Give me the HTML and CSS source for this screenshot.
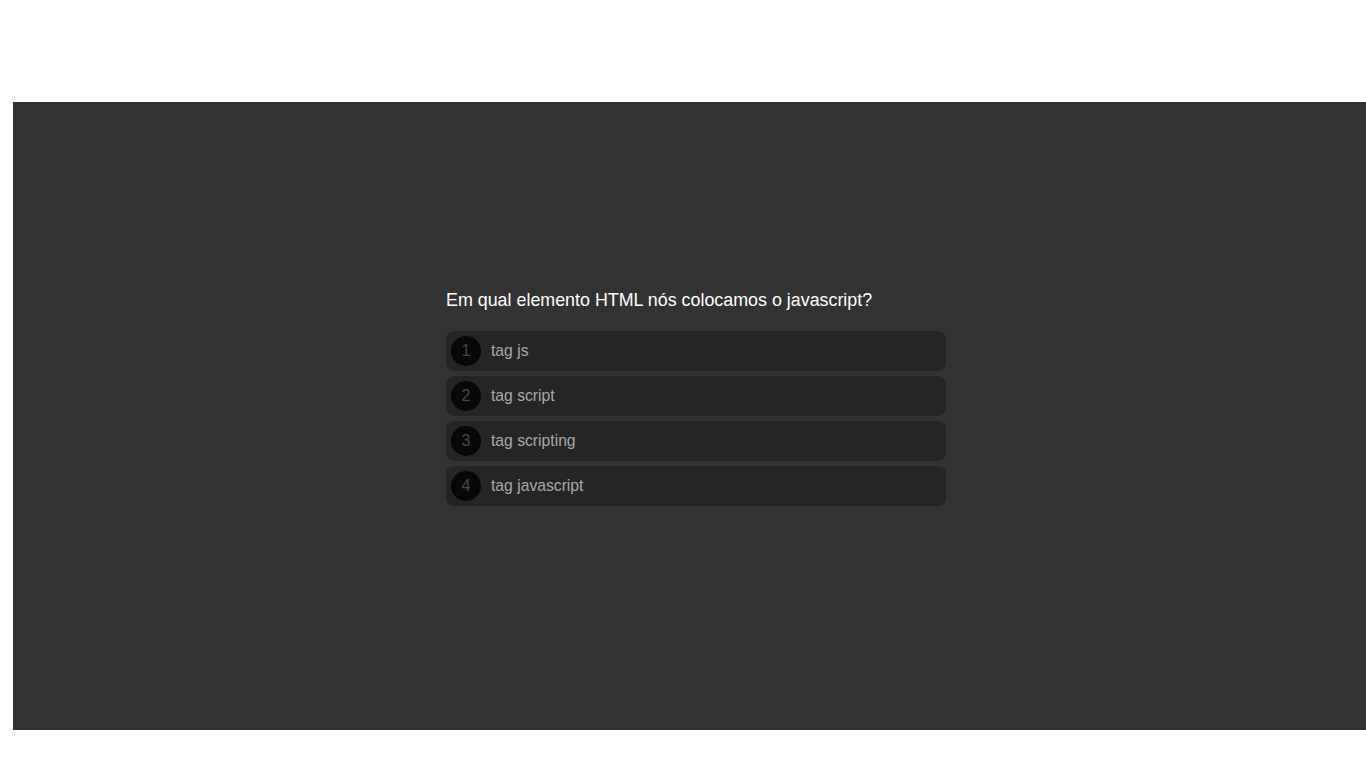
FILE: index.html
```html
<!DOCTYPE html>
<html lang="pt-BR">
<head>
<meta charset="utf-8">
<title>Quiz</title>
<link rel="stylesheet" href="styles.css">
</head>
<body>
<main class="stage">
  <section class="quiz">
    <h1 class="question">Em qual elemento HTML nós colocamos o javascript?</h1>
    <ul class="options">
      <li class="option"><span class="num">1</span><span class="label">tag js</span></li>
      <li class="option"><span class="num">2</span><span class="label">tag script</span></li>
      <li class="option"><span class="num">3</span><span class="label">tag scripting</span></li>
      <li class="option"><span class="num">4</span><span class="label">tag javascript</span></li>
    </ul>
  </section>
</main>
</body>
</html>
```
FILE: styles.css
```css
html, body {
  margin: 0;
  padding: 0;
  background: #ffffff;
  overflow: hidden;
  height: 768px;
}
body {
  font-family: "Liberation Sans", Arial, sans-serif;
}
.stage {
  margin: 102px 0 0 13px;
  width: 1366px;
  height: 628px;
  background: #333333;
  display: flex;
  justify-content: center;
  align-items: flex-start;
  box-sizing: border-box;
  padding-top: 187px;
}
.quiz {
  width: 500px;
}
.question {
  margin: 0 0 20px;
  font-size: 17.87px;
  font-weight: normal;
  color: #ffffff;
  line-height: 22px;
}
.options {
  list-style: none;
  margin: 0;
  padding: 0;
  display: flex;
  flex-direction: column;
  gap: 5px;
}
.option {
  height: 40px;
  background: #252525;
  border-radius: 8px;
  display: flex;
  align-items: center;
  padding-left: 5px;
  gap: 10px;
}
.num {
  width: 30px;
  height: 30px;
  border-radius: 50%;
  background: #080808;
  color: #4a4a4a;
  font-size: 16px;
  display: flex;
  align-items: center;
  justify-content: center;
}
.label {
  color: #a8a8a8;
  font-size: 15.7px;
}
```
